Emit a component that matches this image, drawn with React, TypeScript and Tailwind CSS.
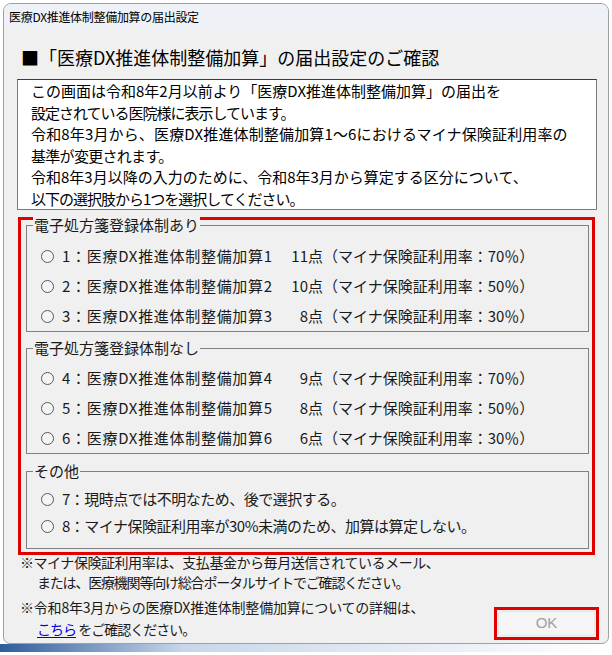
import React from 'react';

const font = 'font-["Noto_Sans_CJK_JP","Noto_Sans",sans-serif]';

type Option = { no: string; label: string; pts?: string; rate?: string };

const withRegistration: Option[] = [
  { no: '1', label: '医療DX推進体制整備加算1', pts: '11点', rate: '70％' },
  { no: '2', label: '医療DX推進体制整備加算2', pts: '10点', rate: '50％' },
  { no: '3', label: '医療DX推進体制整備加算3', pts: '8点', rate: '30％' },
];

const withoutRegistration: Option[] = [
  { no: '4', label: '医療DX推進体制整備加算4', pts: '9点', rate: '70％' },
  { no: '5', label: '医療DX推進体制整備加算5', pts: '8点', rate: '50％' },
  { no: '6', label: '医療DX推進体制整備加算6', pts: '6点', rate: '30％' },
];

const others: Option[] = [
  { no: '7', label: '現時点では不明なため、後で選択する。' },
  { no: '8', label: 'マイナ保険証利用率が30%未満のため、加算は算定しない。' },
];

function Radio() {
  return <span className="block w-[13px] h-[13px] rounded-full border border-[#5a5a5a] bg-[#f4f4f4] shrink-0" />;
}

function OptionRow({ opt, rowClass }: { opt: Option; rowClass: string }) {
  return (
    <label className={`flex items-center pl-[14px] ${rowClass}`}>
      <Radio />
      <span className="ml-[8px] flex items-center whitespace-nowrap">
        {opt.pts ? (
          <>
            <span className="w-[220px] tracking-[0.7px]">{opt.no}：{opt.label}</span>
            <span className="w-[41px] text-right">{opt.pts}</span>
            <span>（マイナ保険証利用率：{opt.rate}）</span>
          </>
        ) : (
          <span className="tracking-[-0.5px]">{opt.no}：{opt.label}</span>
        )}
      </span>
    </label>
  );
}

function Group({ title, options, className, rowClass }: { title: string; options: Option[]; className: string; rowClass: string }) {
  return (
    <div className={`relative ml-[5px] mr-[3px] border border-[#808080] ${className}`}>
      {/* 枠線の上に乗る見出し */}
      <span className="absolute left-[6px] -top-[11px] px-[1px] bg-[#f0f0f0] leading-[20px]">{title}</span>
      {options.map((o) => (
        <OptionRow key={o.no} opt={o} rowClass={rowClass} />
      ))}
    </div>
  );
}

export default function App() {
  return (
    <div className={`w-[612px] h-[655px] bg-white overflow-hidden text-[15px] text-[#1a1a1a] ${font}`}>
      <div className="ml-[3px] mr-[3px] mt-[3px] h-[641px] border border-[#a0a0a0] rounded-t-[8px] rounded-b-[7px] bg-[#f0f0f0] flex flex-col overflow-hidden">
        {/* タイトルバー */}
        <div className="h-[25px] shrink-0 bg-[#eef2f7] flex items-center pl-[5px] text-[12px] tracking-[-0.3px] text-black">
          医療DX推進体制整備加算の届出設定
        </div>

        <div className="flex-1 pl-[13px] pr-[11px] flex flex-col">
          <h1 className="pt-[16px] pb-[10px] pl-[4px] text-[18px] leading-[24px] text-black">
            ■「医療DX推進体制整備加算」の届出設定のご確認
          </h1>

          <div className="h-[131px] bg-white border border-[#7a7a7a] border-t-[#3c3c3c] pl-[13px] leading-[21.5px] text-black whitespace-nowrap">
            <p>この画面は令和8年2月以前より「医療DX推進体制整備加算」の届出を</p>
            <p className="tracking-[-1px]">設定されている医院様に表示しています。</p>
            <p className="tracking-[0.15px]">令和8年3月から、医療DX推進体制整備加算1～6におけるマイナ保険証利用率の</p>
            <p className="tracking-[-0.7px]">基準が変更されます。</p>
            <p>令和8年3月以降の入力のために、令和8年3月から算定する区分について、</p>
            <p className="tracking-[-1px]">以下の選択肢から1つを選択してください。</p>
          </div>

          <div className="mt-[7px] ml-[1px] mr-[2px] border-[3px] border-[#e00000] pt-[5px] pb-[3px]">
            <Group title="電子処方箋登録体制あり" options={withRegistration} className="pt-[15px]" rowClass="h-[30px]" />
            <Group title="電子処方箋登録体制なし" options={withoutRegistration} className="mt-[16px] pt-[14px]" rowClass="h-[30px]" />
            <Group title="その他" options={others} className="mt-[17px] pt-[14px] pb-[8px]" rowClass="h-[27px]" />
          </div>

          <div className="flex items-start justify-between">
            <div className="-mt-[3px] pl-[3px] text-[14px] leading-[20px] whitespace-nowrap">
              <p className="tracking-[-0.45px]">※マイナ保険証利用率は、支払基金から毎月送信されているメール、</p>
              <p className="pl-[17px] tracking-[-1.2px]">または、医療機関等向け総合ポータルサイトでご確認ください。</p>
              <p className="mt-[5px] tracking-[-0.2px]">※令和8年3月からの医療DX推進体制整備加算についての詳細は、</p>
              <p className="pl-[17px] mt-[2px] tracking-[-1px]">
                <a className="text-[#0000ee] underline underline-offset-2">こちら</a> をご確認ください。
              </p>
            </div>
            <div className="mt-[52px] -mr-[2px] border-[3px] border-[#e00000] w-[105px] h-[33px] p-[1px] shrink-0">
              <button disabled className="w-full h-full bg-[#f5f5f5] border border-[#e8e8e8] rounded-[3px] text-[#a0a0a0] text-[15px] font-['Liberation_Sans',sans-serif]">
                OK
              </button>
            </div>
          </div>
        </div>
      </div>
      <div className="h-[8px] bg-[linear-gradient(to_right,#2f5c9a,#c8d6ea_30%,#ffffff)]" />
    </div>
  );
}
